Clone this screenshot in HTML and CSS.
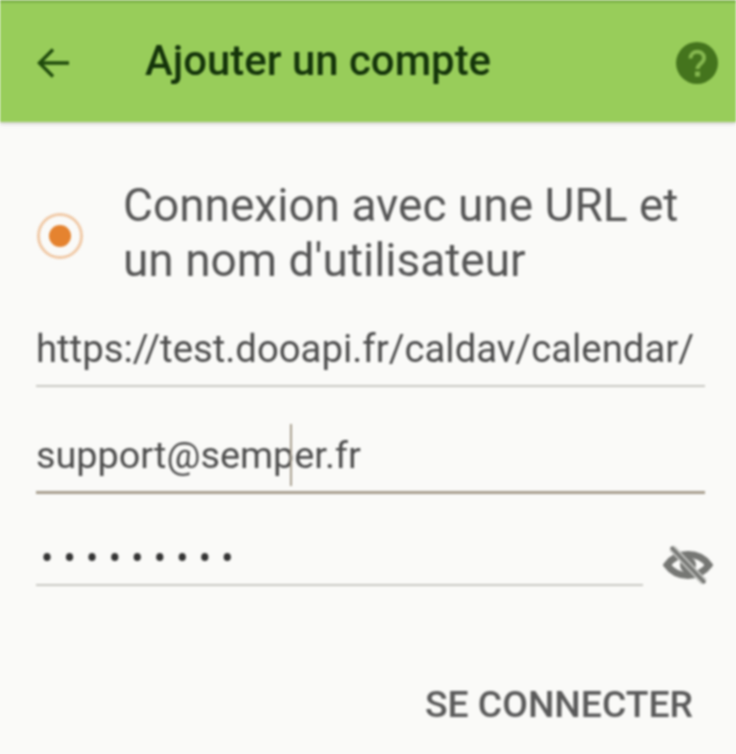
FILE: index.html
```html
<!DOCTYPE html>
<html lang="fr">

<head>
  <meta charset="utf-8">
  <meta name="viewport" content="width=device-width, initial-scale=1">
  <title>Ajouter un compte</title>
  <link rel="stylesheet" href="styles.css">
</head>

<body>
  <header class="toolbar">
    <svg class="back-icon" viewBox="0 0 36 36" width="36" height="36" aria-hidden="true">
      <path d="M34 18H5M18 4.500 4.500 18 18 31.500" fill="none" stroke="#1f4a0c" stroke-width="3.400"/>
    </svg>
    <h1 class="toolbar-title">Ajouter un compte</h1>
    <svg class="help-icon" viewBox="0 0 44 44" width="44" height="44" aria-hidden="true">
      <circle cx="22" cy="22" r="21" fill="#44741d"/>
      <path d="M15.500 17.500c0-9 13.500-9 13.500-.5 0 5.500-6.500 5.500-6.500 11" fill="none" stroke="#86b850" stroke-width="4"/>
      <rect x="20" y="30.500" width="5" height="5" fill="#86b850"/>
    </svg>
  </header>

  <main class="content">
    <div class="radio-row">
      <span class="radio"><span class="radio-dot"></span></span>
      <span class="radio-label">Connexion avec une URL et un nom d'utilisateur</span>
    </div>

    <div class="field field-url">https://test.dooapi.fr/caldav/calendar/</div>
    <div class="field field-active">support@semp<span class="caret"></span>er.fr</div>

    <div class="password-row">
      <div class="field field-password">•••••••••</div>
      <svg class="eye-icon" viewBox="0 0 50 40" width="50" height="40" aria-hidden="true">
        <path d="M4 20C14 6 36 6 46 20 36 34 14 34 4 20Z" fill="none" stroke="#767774" stroke-width="7"/>
        <circle cx="25" cy="20" r="8" fill="#767774"/>
        <path d="M9 3 41 37" stroke="#c4c5c2" stroke-width="7"/>
        <path d="M8 2 42 38" stroke="#767774" stroke-width="3.500"/>
      </svg>
    </div>

    <div class="actions">
      <span class="connect-btn">SE CONNECTER</span>
    </div>
  </main>
</body>

</html>
```

FILE: styles.css
```css
html {
  background-color: #fafaf8;
}

body {
  margin: 0;
  height: 754px;
  overflow: hidden;
  font-family: Roboto, "Liberation Sans", sans-serif;
  color: #4d4d4d;
  filter: blur(1px);
}

.toolbar {
  display: flex;
  align-items: center;
  height: 119px;
  padding-left: 35px;
  padding-right: 17px;
  background-color: #98cd5a;
  border-top: 3px solid #7fb44a;
  box-shadow: 0 2px 3px #d0d0cc;
}

.toolbar-title {
  flex: 1;
  margin: 0 0 4px 74px;
  font-size: 41.900px;
  font-weight: 500;
  color: #14340a;
}

.content {
  padding: 0 31px 0 36px;
}

.radio-row {
  display: flex;
  align-items: center;
  padding-top: 56px;
}

.radio {
  display: flex;
  align-items: center;
  justify-content: center;
  flex: none;
  width: 40px;
  height: 40px;
  margin-top: 6px;
  margin-left: 1px;
  margin-right: 41px;
  border: 3px solid #f0c9a6;
  border-radius: 50%;
}

.radio-dot {
  width: 22px;
  height: 22px;
  border-radius: 50%;
  background-color: #e5832f;
}

.radio-label {
  font-size: 46px;
  line-height: 55px;
  margin-left: -1px;
  color: #555;
}

.field {
  font-size: 38.300px;
  line-height: 54px;
  padding-bottom: 9px;
  border-bottom: 2px solid #c9c9c3;
}

.field-url {
  margin-top: 34px;
}

.field-active {
  margin-top: 37px;
  font-size: 37.800px;
  border-bottom: 3px solid #a89f8f;
}

.caret {
  display: inline-block;
  width: 2px;
  height: 62px;
  margin-bottom: -18px;
  margin-left: -4px;
  margin-right: 2px;
  background-color: #a89f8f;
}

.password-row {
  display: flex;
  align-items: center;
  gap: 20px;
  margin-top: 29px;
}

.field-password {
  flex: 1;
  padding: 11px 0 0 5px;
  letter-spacing: 10.400px;
  font-size: 36px;
  line-height: 50px;
  color: #333;
}

.eye-icon {
  flex: none;
  margin-right: -8px;
  margin-top: 21px;
}

.actions {
  display: flex;
  justify-content: flex-end;
  margin-top: 96px;
  margin-right: 12px;
}

.connect-btn {
  font-size: 37.300px;
  font-weight: 500;
  color: #5a5a5a;
}
```
